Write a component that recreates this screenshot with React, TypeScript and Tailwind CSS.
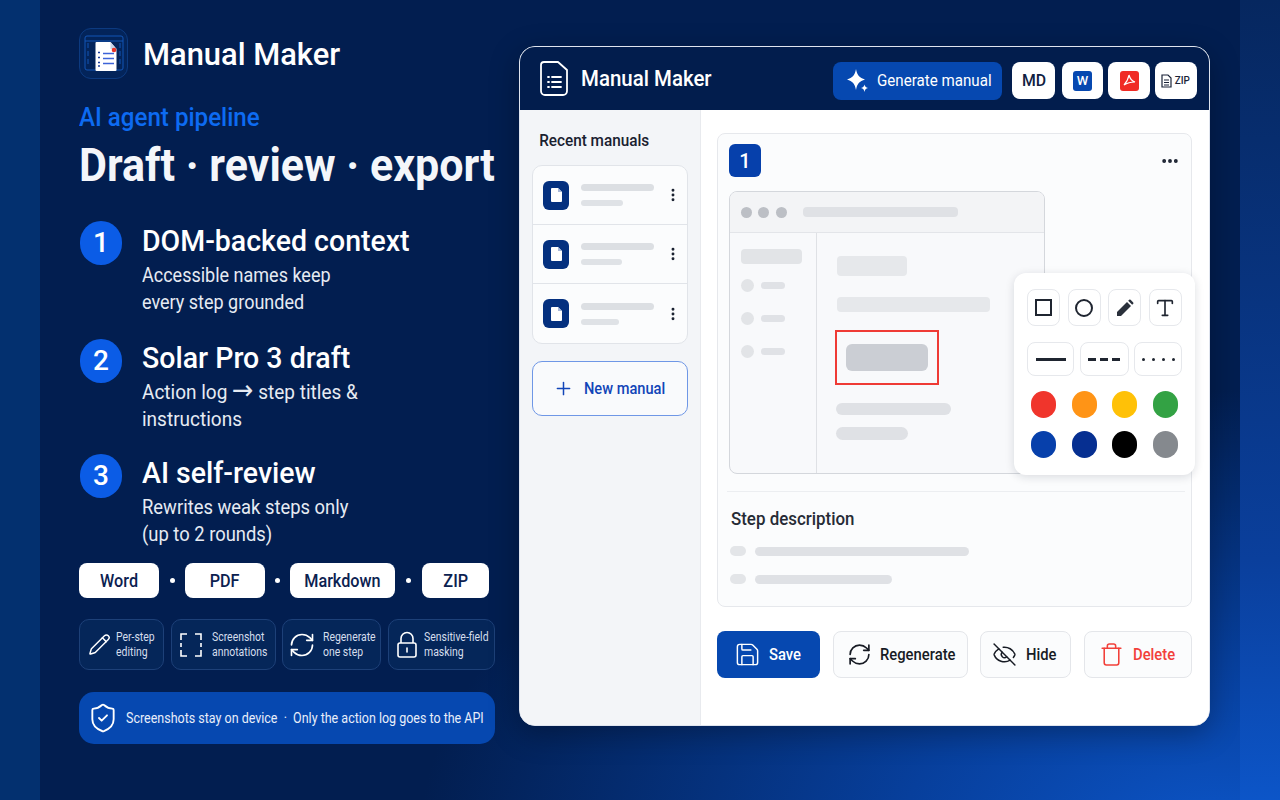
import React from "react";
import {
  Ellipsis,
  EllipsisVertical,
  EyeOff,
  Pencil,
  Plus,
  RefreshCw,
  Save,
  ShieldCheck,
  Trash,
  Type,
} from "lucide-react";

const STEPS: {
  n: string;
  title: string;
  lines: React.ReactNode[];
  mb: string;
  textTop: string;
  bodyScale: string;
}[] = [
  { n: "1", title: "DOM-backed context", lines: ["Accessible names keep", "every step grounded"], mb: "mb-[22px]", textTop: "mt-px", bodyScale: "scale-x-[0.9]" },
  {
    n: "2",
    title: "Solar Pro 3 draft",
    lines: [
      <>
        Action log <span className="font-['DejaVu_Sans'] text-[27px] leading-[20px]">→</span> step titles &amp;
      </>,
      "instructions",
    ],
    mb: "mb-[20px]",
    textTop: "",
    bodyScale: "scale-x-[0.95]",
  },
  { n: "3", title: "AI self-review", lines: ["Rewrites weak steps only", "(up to 2 rounds)"], mb: "mb-[15px]", textTop: "", bodyScale: "scale-x-[0.92]" },
];

function LogoMark() {
  return (
    <div className="w-[49px] h-[51px] rounded-xl bg-[#03245a] border border-[#0c3a80] flex items-center justify-center shrink-0">
      <svg width="42" height="42" viewBox="0 0 42 42" fill="none">
        <rect x="2" y="3" width="38" height="34" rx="2" stroke="#1355b5" strokeWidth="1" />
        <path d="M2 8h38" stroke="#1355b5" strokeWidth="1" />
        <path d="M5 10v24M37 10v24" stroke="#1355b5" strokeWidth="1" strokeDasharray="5 3" />
        <path d="M13.5 9h14l6 7v21a1 1 0 0 1-1 1h-19a1 1 0 0 1-1-1V10a1 1 0 0 1 1-1z" fill="#fff" />
        <path d="M27.5 9v7h6z" fill="#c9d4e8" />
        <circle cx="31" cy="17" r="2.3" fill="#e5352b" />
        <path d="M20 20.5h11M20 25.5h11M20 30.5h11" stroke="#3d63d8" strokeWidth="1.5" />
        <path d="M15 19.5h2M15 24.5h2M15 29.5h2M15 33h2" stroke="#1c3f9e" strokeWidth="1.4" />
      </svg>
    </div>
  );
}

function ScanFrame() {
  return (
    <svg width="22" height="24" viewBox="0 0 22 24" fill="none" stroke="#fff" strokeWidth="1.6">
      <path d="M1 7V1h6M15 1h6v6M21 17v6h-6M7 23H1v-6" />
      <path d="M1 10v4M21 10v4" />
    </svg>
  );
}

function TallLock() {
  return (
    <svg width="20" height="27" viewBox="0 0 20 27" fill="none" stroke="#fff" strokeWidth="1.6">
      <rect x="1" y="12" width="18" height="14" rx="2" />
      <path d="M4 12V7.500a6 6 0 0 1 12 0V12" />
      <path d="M10 17v4" strokeLinecap="round" />
    </svg>
  );
}

function FeatureChip({ icon, a, b, box }: { icon: React.ReactNode; a: string; b: string; box: string }) {
  return (
    <div className={`${box} h-[51px] rounded-[10px] border border-[#1d4078] bg-[#052659] flex items-center shrink-0`}>
      <div className="shrink-0 flex items-center justify-center">{icon}</div>
      <div className="text-[12px] leading-[15px] text-[#d5deed] whitespace-nowrap origin-left scale-x-[0.87]">
        <div>{a}</div>
        <div>{b}</div>
      </div>
    </div>
  );
}

function ExportChip({ w, children }: { w: string; children: React.ReactNode }) {
  return (
    <div className={`${w} h-[35px] bg-white rounded-lg flex items-center justify-center`}>
      <span className="inline-block scale-x-[0.9]">{children}</span>
    </div>
  );
}

function LeftColumn() {
  return (
    <div className="w-[417px] shrink-0 pt-[28px] text-white">
      <div className="flex items-center gap-[15px]">
        <LogoMark />
        <div className="text-[32px] leading-[36px] font-medium whitespace-nowrap origin-left scale-x-[0.965]">Manual Maker</div>
      </div>
      <div className="mt-[23px] text-[25px] leading-[32px] font-medium text-[#0d6bf2] origin-left scale-x-[0.965]">AI agent pipeline</div>
      <div className="mt-[5px] text-[47px] leading-[52px] font-bold whitespace-nowrap text-[#f4f6fa] origin-left scale-x-[0.915]">Draft · review · export</div>
      <div className="mt-[29px]">
        {STEPS.map((s) => (
          <div key={s.n} className={`flex ${s.mb}`}>
            <div className="w-[42px] h-[44px] mt-[1px] ml-px rounded-full bg-[#0b5ce6] flex items-center justify-center text-[28px] font-medium shrink-0">{s.n}</div>
            <div className={`ml-[20px] ${s.textTop}`}>
              <div className="text-[30px] leading-[40px] font-medium whitespace-nowrap origin-left scale-x-[0.95]">{s.title}</div>
              <div className={`text-[20px] leading-[27px] text-[#e6ebf3] mt-[1px] whitespace-nowrap origin-left ${s.bodyScale}`}>
                <div>{s.lines[0]}</div>
                <div>{s.lines[1]}</div>
              </div>
            </div>
          </div>
        ))}
      </div>
      <div className="flex items-center text-[18px] font-medium text-[#0b2150]">
        <ExportChip w="w-[80px]">Word</ExportChip>
        <div className="w-[26px] flex justify-center"><span className="w-[5px] h-[5px] rounded-full bg-white" /></div>
        <ExportChip w="w-[80px]">PDF</ExportChip>
        <div className="w-[25px] flex justify-center"><span className="w-[5px] h-[5px] rounded-full bg-white" /></div>
        <ExportChip w="w-[105px]">Markdown</ExportChip>
        <div className="w-[27px] flex justify-center"><span className="w-[5px] h-[5px] rounded-full bg-white" /></div>
        <ExportChip w="w-[67px]">ZIP</ExportChip>
      </div>
      <div className="mt-[21px] flex justify-between w-[416px]">
        <FeatureChip box="w-[85px] pl-[8px] gap-[5px]" a="Per-step" b="editing" icon={<Pencil size={23} strokeWidth={1.5} color="#fff" />} />
        <FeatureChip box="w-[105px] pl-[8px] gap-[10px]" a="Screenshot" b="annotations" icon={<ScanFrame />} />
        <FeatureChip box="w-[99px] pl-[5px] gap-[7px]" a="Regenerate" b="one step" icon={<RefreshCw size={28} strokeWidth={1.4} color="#fff" />} />
        <FeatureChip box="w-[107px] pl-[8px] gap-[7px]" a="Sensitive-field" b="masking" icon={<TallLock />} />
      </div>
      <div className="mt-[22px] w-[416px] h-[52px] rounded-[15px] bg-[#0648b0] flex items-center pl-[8px] gap-[7px]">
        <ShieldCheck size={32} strokeWidth={1.4} color="#fff" className="shrink-0" />
        <div className="text-[14px] whitespace-nowrap text-[#e8eefa] origin-left scale-x-[0.892]">Screenshots stay on device&nbsp; ·&nbsp; Only the action log goes to the API</div>
      </div>
    </div>
  );
}

function HeaderDoc() {
  return (
    <svg width="28" height="35" viewBox="0 0 28 35" fill="none" stroke="#fff" strokeWidth="1.8" strokeLinejoin="round" className="shrink-0">
      <path d="M4 1h14l9 8v21a4 4 0 0 1-4 4H5a4 4 0 0 1-4-4V4a3 3 0 0 1 3-3z" />
      <path d="M8 16h1M12 16h9M8 21h1M12 21h9M8 26h1M12 26h9" strokeLinecap="round" />
    </svg>
  );
}

function Spark() {
  return (
    <svg width="24" height="24" viewBox="0 0 24 24" fill="#fff" className="shrink-0">
      <path d="M10 0c1 6 3.500 9 9 10.500-5.500 1.500-8 4.500-9 10.500-1-6-3.500-9-9-10.500C6.500 9 9 6 10 0z" />
      <path d="M18.500 15.500c.4 2 1.300 3 3.500 3.500-2.200.5-3.100 1.500-3.500 4-.4-2.500-1.300-3.500-3.500-4 2.200-.5 3.100-1.500 3.500-3.500z" />
    </svg>
  );
}

function ExportButton({ w, children }: { w: string; children: React.ReactNode }) {
  return (
    <div className={`${w} h-[37px] bg-white rounded-lg flex items-center justify-center shrink-0`}>{children}</div>
  );
}

function CardHeader() {
  return (
    <div className="h-[63px] bg-[#021d4d] flex items-center pl-[20px] pr-[12px] shrink-0">
      <HeaderDoc />
      <div className="ml-[13px] text-[22px] font-medium text-white whitespace-nowrap origin-left scale-x-[0.93]">Manual Maker</div>
      <div className="ml-auto w-[169px] h-[38px] mt-[4px] rounded-lg bg-[#0648b0] flex items-center pl-[13px] gap-[7px] text-white text-[17px] whitespace-nowrap">
        <Spark />
        <span className="inline-block origin-left scale-x-[0.89]">Generate manual</span>
      </div>
      <div className="ml-[10px] mt-[4px] flex gap-[5px]">
        <ExportButton w="w-[43px] mr-[2px]"><span className="inline-block scale-x-[0.93] text-[17px] font-medium text-[#10203f]">MD</span></ExportButton>
        <ExportButton w="w-[41px]">
          <div className="w-[19px] h-[20px] rounded-[3px] bg-[#0648b0] flex items-center justify-center text-[13px] font-medium text-white">W</div>
        </ExportButton>
        <ExportButton w="w-[42px]">
          <div className="w-[19px] h-[20px] rounded-[3px] bg-[#f02b25] flex items-center justify-center">
            <svg width="13" height="13" viewBox="0 0 13 13" fill="none" stroke="#fff" strokeWidth="1.2">
              <path d="M6 1c-.6 3-2 7-5 10 3-2 7-3 11-3-3-1-5-3-6-7z" />
            </svg>
          </div>
        </ExportButton>
        <ExportButton w="w-[42px]">
          <div className="flex items-center gap-[2px]">
            <svg width="11" height="14" viewBox="0 0 11 14" fill="none" stroke="#1a2338" strokeWidth="1.2">
              <path d="M1 1h6l3 3v9H1z" />
              <path d="M3 6h5M3 8.500h5M3 11h5" />
            </svg>
            <span className="inline-block scale-x-[0.9] text-[11px] leading-none font-medium text-[#1a2338]">ZIP</span>
          </div>
        </ExportButton>
      </div>
    </div>
  );
}

function ManualRow({ sub, last }: { sub: string; last?: boolean }) {
  return (
    <div className={`h-[59px] flex items-center pl-[10px] pr-[6px] ${last ? "" : "border-b border-[#e1e4e9]"}`}>
      <div className="w-[26px] h-[29px] rounded-md bg-[#04307f] flex items-center justify-center shrink-0">
        <svg width="11" height="14" viewBox="0 0 11 14" fill="#fff">
          <path d="M1 0h6l4 4v9a1 1 0 0 1-1 1H1a1 1 0 0 1-1-1V1a1 1 0 0 1 1-1z" />
          <path d="M7 0v4h4z" fill="#a9b9d8" />
        </svg>
      </div>
      <div className="ml-[12px] flex-1">
        <div className="w-[73px] h-[7px] rounded-full bg-[#dcdfe3]" />
        <div className={`${sub} h-[6px] mt-[9px] rounded-full bg-[#dfe2e6]`} />
      </div>
      <EllipsisVertical size={16} strokeWidth={2.4} color="#1a2130" />
    </div>
  );
}

function Sidebar() {
  return (
    <div className="w-[181px] shrink-0 bg-[#f3f5f8] border-r border-[#e8eaee] pl-[12px] pr-[12px]">
      <div className="mt-[20px] pl-[8px] text-[17px] leading-[20px] font-medium text-[#1a2130] whitespace-nowrap origin-left scale-x-[0.9]">Recent manuals</div>
      <div className="mt-[15px] w-[156px] rounded-[10px] border border-[#e1e4e9] bg-[#fbfcfd]">
        <ManualRow sub="w-[42px]" />
        <ManualRow sub="w-[41px]" />
        <ManualRow sub="w-[38px]" last />
      </div>
      <div className="mt-[17px] w-[156px] h-[55px] rounded-[10px] border border-[#6f97e6] bg-[#f9fafc] flex items-center pl-[20px] gap-[10px] text-[#1245b8] text-[17px] font-medium whitespace-nowrap">
        <Plus size={21} strokeWidth={1.7} className="shrink-0" />
        <span className="inline-block origin-left scale-x-[0.86]">New manual</span>
      </div>
    </div>
  );
}

function MockBrowser() {
  return (
    <div className="w-[316px] h-[283px] rounded-lg border border-[#d4d7dc] bg-[#f8f9fb] flex flex-col overflow-hidden">
      <div className="h-[41px] bg-[#f3f4f6] border-b border-[#e3e5e9] flex items-center pl-[11px] shrink-0">
        <span className="w-[11px] h-[11px] rounded-full bg-[#bcbfc5]" />
        <span className="w-[11px] h-[11px] rounded-full bg-[#bcbfc5] ml-[6px]" />
        <span className="w-[11px] h-[11px] rounded-full bg-[#bcbfc5] ml-[7px]" />
        <span className="w-[155px] h-[10px] rounded bg-[#dfe1e5] ml-[16px]" />
      </div>
      <div className="flex flex-1">
        <div className="w-[87px] border-r border-[#dfe1e5] pl-[11px] pt-[16px] shrink-0">
          <div className="w-[61px] h-[15px] rounded bg-[#e2e4e7]" />
          <div className="mt-[15px] flex flex-col gap-[20px]">
            {[0, 1, 2].map((i) => (
              <div key={i} className="flex items-center gap-[7px]">
                <span className="w-[13px] h-[13px] rounded-full bg-[#e2e4e7]" />
                <span className="w-[24px] h-[7px] rounded-full bg-[#e0e2e6]" />
              </div>
            ))}
          </div>
        </div>
        <div className="pl-[20px] pt-[23px]">
          <div className="w-[70px] h-[20px] rounded bg-[#e6e8eb]" />
          <div className="mt-[21px] w-[153px] h-[15px] rounded bg-[#e6e8eb]" />
          <div className="mt-[18px] -ml-[2px] w-[104px] h-[55px] border-2 border-[#ef3b35] flex items-center pl-[9px]">
            <div className="w-[82px] h-[27px] rounded-md bg-[#cbced4]" />
          </div>
          <div className="mt-[18px] -ml-px w-[115px] h-[12px] rounded-full bg-[#dfe1e5]" />
          <div className="mt-[12px] -ml-px w-[72px] h-[13px] rounded-full bg-[#dfe1e5]" />
        </div>
      </div>
    </div>
  );
}

function ToolButton({ w, children }: { w: string; children: React.ReactNode }) {
  return (
    <div className={`${w} rounded-lg border border-[#e6e8ec] bg-white flex items-center justify-center`}>{children}</div>
  );
}

const SWATCHES = ["#f0352c", "#ff9416", "#ffc107", "#33a244", "#0740ab", "#062f91", "#000000", "#85898e"];

function AnnotationPopover() {
  return (
    <div className="absolute left-[296px] top-[139px] w-[181px] h-[202px] rounded-xl bg-white shadow-[0_2px_10px_rgba(15,23,42,0.14)] px-[13px] pt-[16px]">
      <div className="flex justify-between h-[37px]">
        <ToolButton w="w-[33px]"><span className="w-[17px] h-[17px] border-2 border-[#1f2530]" /></ToolButton>
        <ToolButton w="w-[33px]"><span className="w-[18px] h-[18px] rounded-full border-2 border-[#1f2530]" /></ToolButton>
        <ToolButton w="w-[33px]">
          <svg width="18" height="18" viewBox="0 0 18 18" fill="#2a303b">
            <path d="M1 17v-4L11 3l4 4L5 17z" />
            <path d="M12.200 1.800l1-1a1 1 0 0 1 1.400 0l2.600 2.600a1 1 0 0 1 0 1.400l-1 1z" />
          </svg>
        </ToolButton>
        <ToolButton w="w-[33px]"><Type size={22} strokeWidth={1.8} color="#1f2530" /></ToolButton>
      </div>
      <div className="flex justify-between h-[34px] mt-[16px]">
        <ToolButton w="w-[47px]"><span className="w-[30px] h-[3px] bg-[#1f2530]" /></ToolButton>
        <ToolButton w="w-[49px]">
          <div className="flex gap-[4px]">
            <span className="w-[8px] h-[3px] bg-[#1f2530]" />
            <span className="w-[8px] h-[3px] bg-[#1f2530]" />
            <span className="w-[8px] h-[3px] bg-[#1f2530]" />
          </div>
        </ToolButton>
        <ToolButton w="w-[48px]">
          <div className="flex gap-[7px]">
            {[0, 1, 2, 3].map((i) => (
              <span key={i} className="w-[3px] h-[3px] rounded-full bg-[#1f2530]" />
            ))}
          </div>
        </ToolButton>
      </div>
      <div className="mt-[15px] grid grid-cols-4 gap-y-[13px] -mx-[4px]">
        {SWATCHES.map((c) => (
          <div key={c} className="flex justify-center">
            <span className="w-[25px] h-[27px] rounded-full" style={{ backgroundColor: c }} />
          </div>
        ))}
      </div>
    </div>
  );
}

function ActionButton({ className, label, icon }: { className: string; label: string; icon: React.ReactNode }) {
  return (
    <div className={`h-[47px] rounded-lg flex items-center text-[17px] font-medium whitespace-nowrap ${className}`}>
      {icon}
      <span className="inline-block origin-left scale-x-[0.87]">{label}</span>
    </div>
  );
}

function MainPane() {
  return (
    <div className="flex-1 bg-white pl-[16px] pt-[23px]">
      <div className="relative w-[475px] h-[474px] rounded-lg border border-[#e6e8ec] bg-[#fbfcfd] pl-[11px] pt-[10px]">
        <div className="flex items-start">
          <div className="w-[32px] h-[33px] rounded-md bg-[#0640ab] flex items-center justify-center text-white text-[20px] font-medium">1</div>
          <Ellipsis size={20} strokeWidth={2.6} color="#1a2130" className="ml-auto mr-[11px] mt-[7px]" />
        </div>
        <div className="mt-[14px]"><MockBrowser /></div>
        <AnnotationPopover />
        <div className="mt-[17px] mr-[6px] -ml-[2px] border-t border-[#eceef1]" />
        <div className="mt-[15px] ml-[2px] text-[19px] leading-[24px] font-medium text-[#262b35] whitespace-nowrap origin-left scale-x-[0.89]">Step description</div>
        <div className="mt-[15px] ml-[1px] flex items-center gap-[9px]">
          <span className="w-[16px] h-[10px] rounded-full bg-[#e3e5e8]" />
          <span className="w-[214px] h-[9px] rounded-full bg-[#dfe1e5]" />
        </div>
        <div className="mt-[18px] ml-[1px] flex items-center gap-[9px]">
          <span className="w-[16px] h-[10px] rounded-full bg-[#e3e5e8]" />
          <span className="w-[137px] h-[9px] rounded-full bg-[#dfe1e5]" />
        </div>
      </div>
      <div className="mt-[24px] flex">
        <ActionButton className="w-[103px] bg-[#0648b0] text-white pl-[17px] gap-[8px]" label="Save" icon={<Save size={27} strokeWidth={1.3} />} />
        <ActionButton className="w-[135px] ml-[13px] bg-[#fbfcfd] border border-[#e4e6ea] text-[#171b24] pl-[13px] gap-[8px]" label="Regenerate" icon={<RefreshCw size={25} strokeWidth={1.6} />} />
        <ActionButton className="w-[91px] ml-[12px] bg-[#fbfcfd] border border-[#e4e6ea] text-[#171b24] pl-[11px] gap-[9px]" label="Hide" icon={<EyeOff size={25} strokeWidth={1.4} />} />
        <ActionButton className="w-[108px] ml-[13px] bg-[#fbfcfd] border border-[#e4e6ea] text-[#f2403a] pl-[14px] gap-[9px]" label="Delete" icon={<Trash size={25} strokeWidth={1.5} />} />
      </div>
    </div>
  );
}

export default function App() {
  return (
    <div
      className="w-[1280px] h-[800px] overflow-hidden flex bg-[radial-gradient(ellipse_800px_450px_at_1220px_840px,#0c55c8_0%,#073f9c_40%,#021e50_100%)]"
      style={{ fontFamily: 'Roboto, "Noto Sans", sans-serif' }}
    >
      <div className="w-[40px] h-full shrink-0 bg-[#03306f]" />
      <div className="flex-1 flex pl-[39px]">
        <LeftColumn />
        <div className="ml-[23px] mt-[46px] w-[691px] h-[680px] rounded-2xl border border-[#dfe4ee] bg-white overflow-hidden flex flex-col shrink-0 shadow-[0_8px_30px_rgba(0,0,0,0.3)]">
          <CardHeader />
          <div className="flex flex-1">
            <Sidebar />
            <MainPane />
          </div>
        </div>
      </div>
      <div className="w-[40px] h-full shrink-0 bg-[linear-gradient(180deg,#06275f_0%,#0a3f9c_70%,#0c55c8_100%)]" />
    </div>
  );
}
